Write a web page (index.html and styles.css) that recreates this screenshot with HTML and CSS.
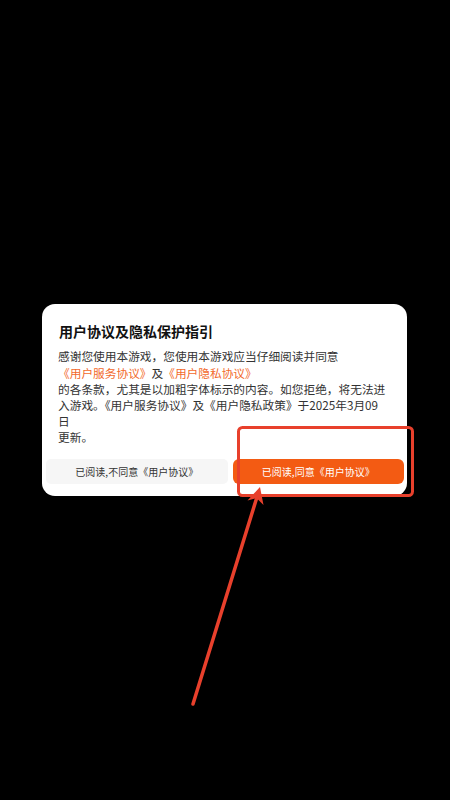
FILE: index.html
```html
<!DOCTYPE html>
<html lang="zh-CN">
<head>
<meta charset="utf-8">
<link rel="stylesheet" href="styles.css">
</head>
<body>
<div class="screen">
  <div class="dialog">
    <div class="title">用户协议及隐私保护指引</div>
    <div class="body">
      <div>感谢您使用本游戏，您使用本游戏应当仔细阅读并同意</div>
      <div><span class="link">《用户服务协议》</span>及<span class="link">《用户隐私协议》</span></div>
      <div>的各条款，尤其是以加粗字体标示的内容。如您拒绝，将无法进入游戏。《用户服务协议》及《用户隐私政策》于2025年3月09<br>日</div>
      <div>更新。</div>
    </div>
    <div class="actions">
      <div class="btn btn-deny">已阅读,不同意《用户协议》</div>
      <div class="btn btn-agree">已阅读,同意《用户协议》</div>
    </div>
  </div>
  <svg class="annot" width="450" height="800" viewBox="0 0 450 800">
    <rect x="238.5" y="427.5" width="174" height="68" rx="4" ry="4" fill="none" stroke="#e8402c" stroke-width="3"/>
    <line x1="193" y1="704" x2="257" y2="497" stroke="#e8402c" stroke-width="3.5" stroke-linecap="round"/>
    <polygon points="260,487 247.5,500.5 256.5,498 263.5,505" fill="#e8402c"/>
  </svg>
</div>
</body>
</html>
```
FILE: styles.css
```css
html, body {
  margin: 0;
  padding: 0;
  background: #000;
}
.screen {
  position: relative;
  width: 450px;
  height: 800px;
  display: flex;
  align-items: center;
  justify-content: center;
  font-family: "Noto Sans CJK SC", "Noto Sans", sans-serif;
}
.dialog {
  width: 365px;
  margin-left: -1px;
  background: #fff;
  border-radius: 13px;
  padding: 17px 0 12px 0;
  box-sizing: border-box;
}
.title {
  padding: 0 16px 0 17px;
  font-size: 14px;
  line-height: 20px;
  font-weight: 600;
  color: #111;
}
.body {
  margin-top: 7px;
  padding: 0 17px 0 16px;
  font-size: 11.7px;
  line-height: 16.2px;
  color: #333;
}
.link {
  color: #f26a2c;
}
.actions {
  display: flex;
  gap: 5px;
  margin-top: 13px;
  padding: 0 3px 0 4px;
}
.btn {
  flex: 1 1 auto;
  height: 25px;
  line-height: 25px;
  text-align: center;
  font-size: 10px;
  white-space: nowrap;
}
.btn-deny {
  background: #f6f6f6;
  color: #333;
  border-radius: 5px;
}
.btn-agree {
  background: #f35b13;
  color: #fff;
  border-radius: 6px;
}
.annot {
  position: absolute;
  left: 0;
  top: 0;
  pointer-events: none;
}
```
